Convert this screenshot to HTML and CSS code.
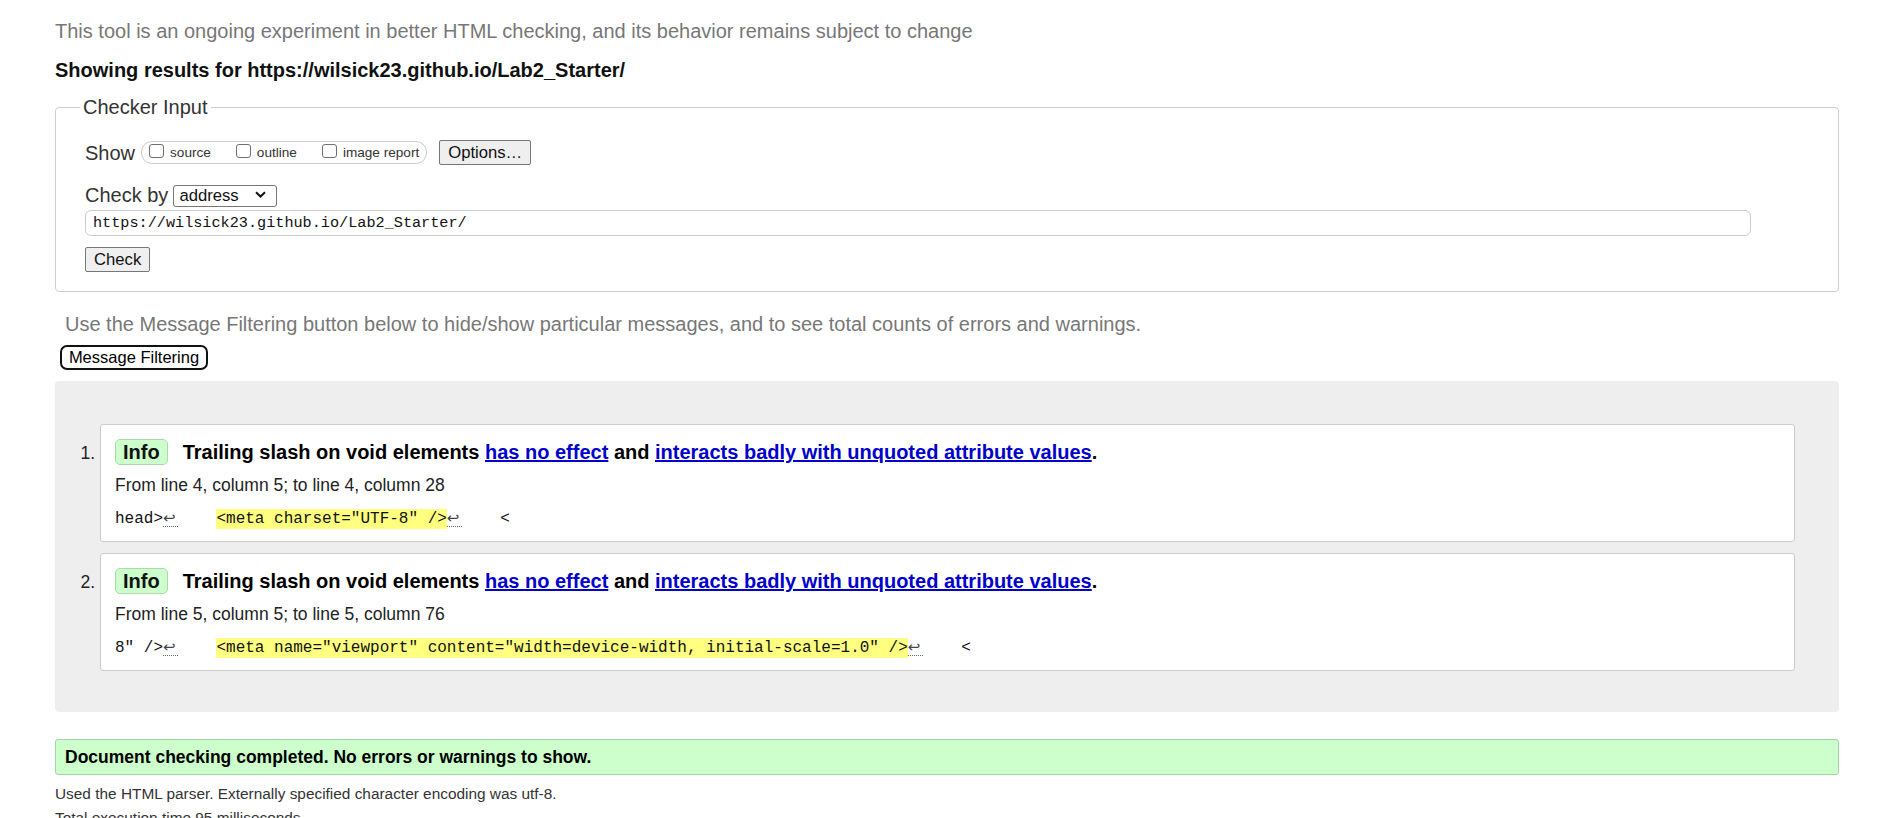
FILE: index.html
```html
<!DOCTYPE html>
<html lang="en">
<head>
<meta charset="utf-8">
<title>Nu Html Checker</title>
<link rel="stylesheet" href="styles.css">
</head>
<body>
<div class="page">
  <p class="intro">This tool is an ongoing experiment in better HTML checking, and its behavior remains subject to change</p>
  <p class="showing">Showing results for https://wilsick23.github.io/Lab2_Starter/</p>
  <form class="checker">
    <fieldset class="checker-input">
      <legend>Checker Input</legend>
      <div class="row show-row">
        <span class="row-label">Show</span>
        <span class="show-group">
          <label class="opt"><input type="checkbox" class="cb">source</label>
          <label class="opt"><input type="checkbox" class="cb">outline</label>
          <label class="opt"><input type="checkbox" class="cb">image report</label>
        </span>
        <button type="button" class="btn options-btn">Options…</button>
      </div>
      <div class="row checkby-row">
        <span class="row-label by-label">Check by</span>
        <span class="select-wrap">
          <select class="select"><option>address</option></select>
          <svg class="chevron" width="11" height="7" viewBox="0 0 11 7" aria-hidden="true"><path d="M1 1.2 L5.5 5.5 L10 1.2" fill="none" stroke="#111" stroke-width="2"/></svg>
        </span>
      </div>
      <input class="url" type="text" value="https://wilsick23.github.io/Lab2_Starter/">
      <div class="row check-row"><button class="btn check-btn" type="button">Check</button></div>
    </fieldset>
  </form>
  <p class="filter-note">Use the Message Filtering button below to hide/show particular messages, and to see total counts of errors and warnings.</p>
  <button class="filter-btn" type="button">Message Filtering</button>
  <div class="results">
    <ol class="messages">
      <li class="msg">
        <p class="msg-title"><span class="badge">Info</span><span>Trailing slash on void elements <a href="#">has no effect</a> and <a href="#">interacts badly with unquoted attribute values</a>.</span></p>
        <p class="location">From line 4, column 5; to line 4, column 28</p>
        <p class="extract"><code>head&gt;<span class="lf">↩</span>    <mark>&lt;meta charset="UTF-8" /&gt;</mark><span class="lf">↩</span>    &lt;</code></p>
      </li>
      <li class="msg">
        <p class="msg-title"><span class="badge">Info</span><span>Trailing slash on void elements <a href="#">has no effect</a> and <a href="#">interacts badly with unquoted attribute values</a>.</span></p>
        <p class="location">From line 5, column 5; to line 5, column 76</p>
        <p class="extract"><code>8" /&gt;<span class="lf">↩</span>    <mark>&lt;meta name="viewport" content="width=device-width, initial-scale=1.0" /&gt;</mark><span class="lf">↩</span>    &lt;</code></p>
      </li>
    </ol>
  </div>
  <p class="success">Document checking completed. No errors or warnings to show.</p>
  <p class="details">Used the HTML parser. Externally specified character encoding was utf-8.</p>
  <p class="details details-time">Total execution time 95 milliseconds.</p>
</div>
</body>
</html>
```
FILE: styles.css
```css
html, body {
  margin: 0;
  padding: 0;
  background: #fff;
}

body {
  font-family: "Liberation Sans", Arial, sans-serif;
  font-size: 20px;
  color: #222;
}

.page {
  padding: 0 47px 0 55px;
}

p {
  margin: 0;
}

.intro {
  margin-top: 19px;
  line-height: 24px;
  color: #777;
}

.showing {
  margin-top: 15px;
  line-height: 24px;
  font-weight: bold;
  color: #111;
}

.checker {
  margin: 0;
}

.checker-input {
  margin: 13px 0 0;
  padding: 21px 87px 19px 29px;
  border: 1px solid #cfcfcf;
  border-radius: 4px;
  min-width: 0;
}

.checker-input legend {
  padding: 0 3px;
  margin-left: -5px;
  line-height: 24px;
  color: #333;
}

.row {
  display: flex;
  align-items: center;
}

.row-label {
  color: #333;
  line-height: 24px;
}

.show-row {
  height: 25px;
}

.show-row .row-label {
  margin-right: 6px;
}

.show-group {
  display: inline-flex;
  align-items: center;
  box-sizing: border-box;
  height: 23px;
  padding: 0 7px;
  border: 1px solid #cccccc;
  border-radius: 11px;
}

.opt {
  display: inline-flex;
  align-items: center;
  font-size: 13.6px;
  color: #333;
  margin-right: 25px;
}

.opt:last-child {
  margin-right: 0;
}

.cb {
  -webkit-appearance: none;
  appearance: none;
  box-sizing: border-box;
  width: 15px;
  height: 14px;
  margin: 0 6px 3px 0;
  border: 1px solid #6f6f6f;
  border-radius: 3px;
  background: #fff;
}

.btn {
  box-sizing: border-box;
  height: 25px;
  font-family: "Liberation Sans", Arial, sans-serif;
  font-size: 16.67px;
  color: #111;
  background: #efefef;
  border: 1px solid #767676;
  border-radius: 2px;
  padding: 0 8px;
  line-height: 23px;
}

.options-btn {
  margin-left: 12px;
  width: 92px;
}

.checkby-row {
  margin-top: 19px;
  height: 22px;
}

.by-label {
  margin-right: 5px;
}

.select-wrap {
  position: relative;
  display: inline-block;
  height: 22px;
  margin-top: -2px;
}

.select {
  -webkit-appearance: none;
  appearance: none;
  box-sizing: border-box;
  width: 104px;
  height: 22px;
  padding: 0 0 0 5px;
  margin: 0;
  font-family: "Liberation Sans", Arial, sans-serif;
  font-size: 16.67px;
  color: #111;
  background: #fff;
  border: 1px solid #767676;
  border-radius: 3px;
}

.chevron {
  position: absolute;
  right: 11px;
  top: 8px;
  pointer-events: none;
}

.url {
  display: block;
  box-sizing: border-box;
  width: 100%;
  height: 26px;
  margin: 4px 0 0;
  padding: 0 7px;
  font-family: "Liberation Mono", "DejaVu Sans Mono", monospace;
  font-size: 15.2px;
  color: #111;
  border: 1px solid #cccccc;
  border-radius: 6px;
  background: #fff;
}

.check-row {
  margin-top: 11px;
}

.check-btn {
  width: 65px;
}

.filter-note {
  margin-top: 20px;
  padding-left: 10px;
  line-height: 24px;
  color: #777;
}

.filter-btn {
  display: block;
  box-sizing: border-box;
  height: 25px;
  width: 148px;
  margin: 9px 0 0 5px;
  padding: 0;
  font-family: "Liberation Sans", Arial, sans-serif;
  font-size: 16.5px;
  color: #000;
  background: #fff;
  border: 2px solid #111;
  border-radius: 7px;
}

.results {
  margin-top: 11px;
  background: #eeeeee;
  border-radius: 4px;
  padding: 43px 44px 41px 45px;
}

.messages {
  margin: 0;
  padding: 0;
  list-style: decimal outside;
}

.msg {
  font-size: 17.5px;
  color: #222;
  background: #fff;
  border: 1px solid #cccccc;
  border-radius: 3px;
  padding: 14px 14px 13px 14px;
}

.msg + .msg {
  margin-top: 11px;
}

.msg::marker {
  color: #222;
}

.msg-title {
  font-size: 20px;
  font-weight: bold;
  line-height: 26px;
  height: 26px;
  color: #000;
}

.badge {
  display: inline-block;
  line-height: 24px;
  padding: 0 7px;
  margin: -1px 15px -1px 0;
  background: #ccffcc;
  border: 1px solid #a9d9a9;
  border-radius: 5px;
  color: #111;
}

.msg-title a {
  color: #0000cc;
  text-decoration: underline;
}

.location {
  margin-top: 9px;
  line-height: 22px;
  height: 22px;
}

.extract {
  margin-top: 10px;
  line-height: 22px;
  height: 22px;
}

.extract code {
  font-family: "Liberation Mono", "DejaVu Sans Mono", monospace;
  font-size: 16px;
  white-space: pre;
  color: #111;
}

.extract mark {
  background: #ffff80;
  color: #111;
  padding: 1px 0;
}

.lf {
  display: inline-block;
  width: 15px;
  font-family: "DejaVu Sans", sans-serif;
  font-size: 15px;
  line-height: 15px;
  color: #444;
  text-align: left;
  border-bottom: 1px dotted #666;
}

.success {
  margin-top: 27px;
  box-sizing: border-box;
  height: 36px;
  line-height: 34px;
  padding: 0 9px;
  font-size: 17.5px;
  font-weight: bold;
  color: #000;
  background: #ccffcc;
  border: 1px solid #a3d6a3;
  border-radius: 3px;
}

.details {
  margin-top: 10px;
  font-size: 15.4px;
  line-height: 18px;
  color: #333;
}

.details-time {
  margin-top: 6px;
}
```
